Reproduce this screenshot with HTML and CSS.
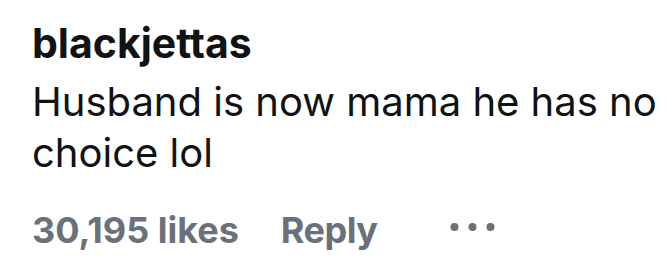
FILE: index.html
```html
<!DOCTYPE html>
<html lang="en">
<head>
    <meta charset="UTF-8">
    <title>Comment</title>
    <link rel="stylesheet" href="styles.css">
</head>
<body>
    <div class="comment">
        <p class="username">blackjettas</p>
        <p class="text">Husband is now mama he has no choice lol</p>
        <div class="actions">
            <span class="likes">30,195 likes</span>
            <span class="reply">Reply</span>
            <span class="more">
                <svg width="45" height="10" viewBox="0 0 45 10">
                    <circle cx="4.5" cy="5" r="4" fill="#6b717b"/>
                    <circle cx="22.5" cy="5" r="4" fill="#6b717b"/>
                    <circle cx="40.5" cy="5" r="4" fill="#6b717b"/>
                </svg>
            </span>
        </div>
    </div>
</body>
</html>
```

FILE: styles.css
```css
body {
    margin: 0;
    background-color: white;
    font-family: Inter, "Noto Sans", sans-serif;
}

.comment {
    padding: 15px 0 0 32px;
    width: 636px;
}

.username {
    margin: 0 0 4px;
    font-size: 41px;
    font-weight: 700;
    color: #101214;
    line-height: 57px;
}

.text {
    margin: 0;
    font-size: 40px;
    color: #101214;
    line-height: 51px;
}

.actions {
    display: flex;
    align-items: center;
    gap: 42px;
    margin-top: 30px;
    font-size: 36px;
    font-weight: 700;
    color: #6b717b;
    line-height: 44px;
}

.reply {
    letter-spacing: -0.5px;
}

.more {
    display: flex;
    margin-left: 30px;
    margin-bottom: 6px;
}
```
